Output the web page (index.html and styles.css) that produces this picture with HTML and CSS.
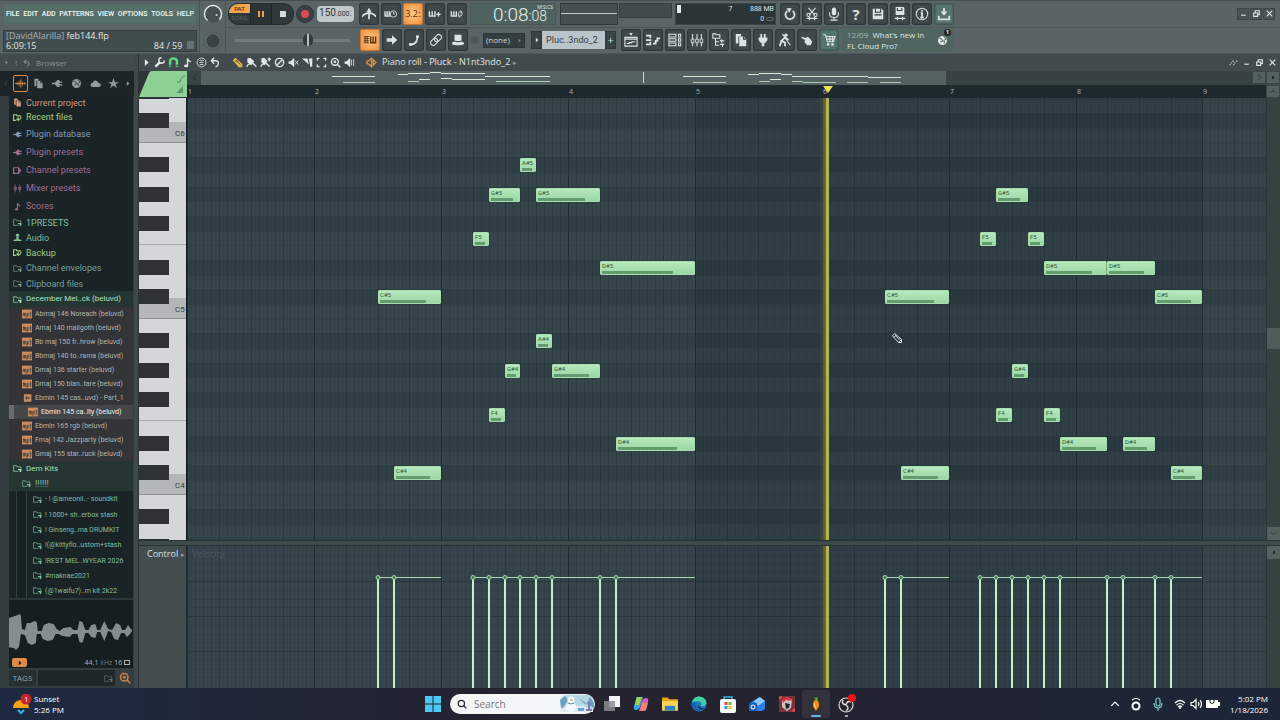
FILE: index.html
```html
<!DOCTYPE html>
<html lang="en">
<head>
<meta charset="utf-8">
<title>Piano roll - feb144.flp</title>
<link rel="stylesheet" href="styles.css">
</head>
<body>
<svg class="defs" aria-hidden="true">
  <symbol id="undo" viewBox="0 0 16 16"><path d="M5 4.5A5.2 5.2 0 1 0 11 4.5" class="ln2"/><path d="M4 1.500h6L7 6.500z" class="fl"/></symbol>
  <symbol id="metro" viewBox="0 0 16 16"><path d="M0 11q3-4 8-4t8 4M8 2v12" class="ln2"/><path d="M8 1l3 5H5z" class="fl"/></symbol>
  <symbol id="keysclock" viewBox="0 0 20 16"><path d="M1.500 4v7h8M4.500 4v6M7.500 4v6" class="ln2"/><circle cx="13.500" cy="8" r="4.500" class="ln"/><path d="M13.500 5v3h2" class="ln"/></symbol>
  <symbol id="keysplus" viewBox="0 0 20 16"><path d="M2 4v7h8V4M6 4v6M12 8.500h6M15 5.500v6" class="ln2"/></symbol>
  <symbol id="keysloop" viewBox="0 0 20 16"><path d="M2 4v7h7V4M5.500 4v6" class="ln2"/><path d="M12 10V7q0-3 5-2M17 6v3q0 3-5 2M15 3l2 2-2 2M14 9l-2 2 2 2" class="ln"/></symbol>
  <symbol id="roll" viewBox="0 0 20 16"><path d="M1 3h8M1 6h8M1 9h8M1 12h8M3 3v9M6 3v9" class="ln"/><path d="M11 3v9h7V3M14.500 3v8" class="ln2"/></symbol>
  <symbol id="arrow" viewBox="0 0 16 16"><path d="M2 6h6V2.500L14 8l-6 5.500V10H2z" class="fl"/></symbol>
  <symbol id="slide" viewBox="0 0 16 16"><path d="M3 13h3q4-1 5-4l1-5" class="ln2"/><circle cx="12" cy="4" r="1.800" class="fl"/><circle cx="4" cy="13" r="1.800" class="fl"/></symbol>
  <symbol id="link" viewBox="0 0 16 16"><g transform="rotate(-45 8 8)" class="ln"><rect x="0.500" y="5" width="9" height="6" rx="3"/><rect x="6.500" y="5" width="9" height="6" rx="3"/></g></symbol>
  <symbol id="hat" viewBox="0 0 16 16"><path d="M4 2h8v8q3 0 3 2t-7 2-7-2 3-2z" class="fl"/><path d="M4 9q4 2 8 0" class="dk"/></symbol>
  <symbol id="playlist" viewBox="0 0 16 16"><path d="M1 5h14v10H1zM1 7h14M3 12h3v-1h3v-1h4" class="ln"/><path d="M6 0h4L8 3z" class="fl"/></symbol>
  <symbol id="pianoroll" viewBox="0 0 16 16"><path d="M0 3h5M0 8h6M0 13h5M5 2v4M5 10v4" class="ln2"/><path d="M8 12h3V9h2V6h3" class="ln2"/></symbol>
  <symbol id="rack" viewBox="0 0 16 16"><path d="M1 1.500h8v3H1zM1 6.500h8v3H1zM1 11.500h8v3H1zM12 1.500h2.500v3H12zM12 6.500h2.500v3H12zM12 11.500h2.500v3H12z" class="ln"/></symbol>
  <symbol id="mixer" viewBox="0 0 16 16"><path d="M3 1v14M8 1v14M13 1v14" class="ln"/><path d="M1.500 7h3v4h-3zM6.500 7h3v4h-3zM11.500 7h3v4h-3z" class="hl"/></symbol>
  <symbol id="treei" viewBox="0 0 16 16"><path d="M1 1h3l1 1h4v4H1zM4 6v8h4M4 10h4M9 9h5M9 13h5M11 7v4M12 12v4" class="ln"/></symbol>
  <symbol id="docs" viewBox="0 0 16 16"><path d="M2 1h6v3H5v8H2z" class="fl"/><path d="M6 4h5l3 3v8H6z" class="fl"/><path d="M11 4v3h3" class="dk"/></symbol>
  <symbol id="plug" viewBox="0 0 16 16"><path d="M5 1h2v4h2V1h2v4h2v3l-2 3H9.500v4h-3v-4H5L3 8V5h2z" class="fl"/></symbol>
  <symbol id="worker" viewBox="0 0 16 16"><circle cx="9" cy="2.500" r="2" class="fl"/><path d="M8 5L4 9l4 2v4M4 9l-2 6M8 5l4 3" class="ln2"/><path d="M5 1l9 13" class="ln"/></symbol>
  <symbol id="touch" viewBox="0 0 16 16"><path d="M2 4l5 2 1-2 3 2 3 4-2 4H8L5 10l1-2-4-2z" class="fl"/></symbol>
  <symbol id="cart" viewBox="0 0 16 16"><path d="M1 2h3l2 8h7l2-6H5M6 7h8M9 4v6M12 4v6" class="ln"/><circle cx="7" cy="13" r="1.500" class="fl"/><circle cx="12" cy="13" r="1.500" class="fl"/></symbol>
  <symbol id="cut" viewBox="0 0 16 16"><path d="M4 1l7 8M12 1L5 9M2 13h12M5 11v4M11 11v4" class="ln"/><circle cx="4" cy="9" r="1.800" class="ln"/><circle cx="12" cy="9" r="1.800" class="ln"/></symbol>
  <symbol id="mic" viewBox="0 0 16 16"><rect x="5.500" y="0.500" width="5" height="9" rx="2.500" class="fl"/><path d="M3 6v2q0 4 5 4t5-4V6M8 12v3M4 15h8" class="ln"/></symbol>
  <symbol id="save" viewBox="0 0 16 16"><path d="M2 2h10l2 2v10H2z" class="fl"/><path d="M5 2v4h6V2M4 9h8" class="dk"/></symbol>
  <symbol id="saveas" viewBox="0 0 16 16"><path d="M3 0h9l1 1v8H3z" class="fl"/><path d="M5 1v3h5V1" class="dk"/><path d="M2 13h12M5 11v4M11 11v4" class="ln"/></symbol>
  <symbol id="info" viewBox="0 0 16 16"><circle cx="8" cy="8" r="6.500" class="ln"/><path d="M6.500 7H8v5M6 12h4M8 3.500v2" class="ln2"/></symbol>
  <symbol id="down" viewBox="0 0 16 16"><path d="M8 1v7M2 10v4h12v-4" class="ln2"/><path d="M4 5h8L8 10z" class="fl"/></symbol>
  <symbol id="min" viewBox="0 0 16 16"><path d="M4 11h8" class="ln2"/></symbol>
  <symbol id="restore" viewBox="0 0 16 16"><path d="M3 7h7v6H3zM6 7V3h7v7h-3" class="ln2"/></symbol>
  <symbol id="close" viewBox="0 0 16 16"><path d="M3 3l10 10M13 3L3 13" class="ln2"/></symbol>
  <symbol id="tri" viewBox="0 0 16 16"><path d="M5 2l7 6-7 6z" class="fl"/></symbol>
  <symbol id="chevr" viewBox="0 0 16 16"><path d="M5 2l6 6-6 6" class="ln2"/></symbol>
  <symbol id="chevl" viewBox="0 0 16 16"><path d="M11 2L5 8l6 6" class="ln2"/></symbol>
  <symbol id="chevu" viewBox="0 0 16 16"><path d="M2 11l6-6 6 6" class="ln2"/></symbol>
  <symbol id="chevd" viewBox="0 0 16 16"><path d="M2 5l6 6 6-6" class="ln2"/></symbol>
  <symbol id="wrench" viewBox="0 0 16 16"><path d="M2 14l7-7" class="ln3"/><path d="M15 5a4 4 0 1 1-4-4" class="ln2"/></symbol>
  <symbol id="magnet" viewBox="0 0 16 16"><path d="M3 14V7q0-5 5-5t5 5v7" class="ln3"/><path d="M1 12h4M11 12h4" class="dk"/></symbol>
  <symbol id="note" viewBox="0 0 16 16"><path d="M8 13V2q1 4 5 5" class="ln2"/><ellipse cx="6" cy="13" rx="3" ry="2" class="fl"/></symbol>
  <symbol id="stamp" viewBox="0 0 16 16"><circle cx="8" cy="8" r="6.500" class="ln"/><path d="M5 5h6M5 8h6M5 11h6" class="ln"/></symbol>
  <symbol id="back" viewBox="0 0 16 16"><path d="M6 1L2 5.500 6 10M2 5.500h6q5 0 4 5-1 3-4 4" class="ln2"/></symbol>
  <symbol id="pencil" viewBox="0 0 16 16"><path d="M2 5l3-3 9 8v4h-4zM4 7l3-3M10 14l4-4M6 5l6 6" class="ln"/></symbol>
  <symbol id="pencilf" viewBox="0 0 16 16"><path d="M1 5l4-4 10 9v5h-5z" class="fl"/><path d="M4 8l4-4M6 5l6 6" class="dk"/></symbol>
  <symbol id="brush" viewBox="0 0 16 16"><path d="M2 2l4-1 6 5-4 6-6-4z" class="fl"/><path d="M1 14q2-4 5-4M10 9l5 5" class="ln2"/></symbol>
  <symbol id="brushp" viewBox="0 0 16 16"><path d="M2 2l4-1 5 5-4 6-5-4z" class="fl"/><path d="M1 14q2-4 5-4M9 9l5 5M11 3h5M13.500 1v5" class="ln2"/></symbol>
  <symbol id="slash" viewBox="0 0 16 16"><circle cx="8" cy="8" r="6" class="ln2"/><path d="M4 12l8-8" class="ln2"/></symbol>
  <symbol id="mute" viewBox="0 0 16 16"><path d="M1 6h3l5-5v14l-5-5H1z" class="fl"/><path d="M10 5l5 6M15 5l-5 6" class="ln"/></symbol>
  <symbol id="slice" viewBox="0 0 16 16"><path d="M0 2h8l2 9zM10 2h5v12h-3z" class="fl"/></symbol>
  <symbol id="select" viewBox="0 0 16 16"><path d="M2 5V2h3M11 2h3v3M14 11v3h-3M5 14H2v-3" class="ln2"/></symbol>
  <symbol id="zoomi" viewBox="0 0 16 16"><circle cx="7" cy="7" r="5" class="ln2"/><path d="M10.500 10.500L15 15" class="ln2"/></symbol>
  <symbol id="zoomd" viewBox="0 0 16 16"><circle cx="7" cy="7" r="5" class="ln2"/><circle cx="7" cy="7" r="2" class="fl"/><path d="M10.500 10.500L15 15" class="ln2"/></symbol>
  <symbol id="spk" viewBox="0 0 16 16"><path d="M1 6h3l5-5v14l-5-5H1z" class="fl"/><path d="M11 4v8M14 3v10" class="ln"/></symbol>
  <symbol id="spko" viewBox="0 0 16 16"><path d="M1.500 6h2l4.500-4v12l-4.500-4h-2zM10.500 4l4 4-4 4z" class="ln2"/></symbol>
  <symbol id="wavei" viewBox="0 0 16 16"><path d="M0 8h16M3 6v4M6 4v8M8.500 2v12M11 5v6M13.500 6.500v3" class="ln"/></symbol>
  <symbol id="plugh" viewBox="0 0 16 16"><path d="M0 7h4l4-4h3v2h4v2h-4v2h4v2h-4v2H8L4 9H0z" class="fl"/></symbol>
  <symbol id="globe" viewBox="0 0 16 16"><circle cx="8" cy="8" r="6.500" class="fl"/><path d="M3 4l4 2 1 3-3 1M10 2l3 4-3 2 1 4" class="dk"/></symbol>
  <symbol id="cloud" viewBox="0 0 16 16"><path d="M3 13q-3-1-2-4 1-2 3-2 1-4 5-3 2 0 3 3 4 0 3.500 4 0 2-2.500 2z" class="fl"/></symbol>
  <symbol id="star" viewBox="0 0 16 16"><path d="M8 0l2 6h6l-5 3 2 6-5-4-5 4 2-6-5-3h6z" class="fl"/></symbol>
  <symbol id="folder" viewBox="0 0 16 16"><path d="M9 13H1V3h5l1 2h7v4" class="ln"/><path d="M9 10h5v3M12 12l2 2" class="ln2"/></symbol>
  <symbol id="folderr" viewBox="0 0 16 16"><path d="M6 13H1V3h5l1 2h7" class="ln2"/><path d="M14 6v3q-1 3-6 2M10 8l-3 3 4 3" class="ln2"/></symbol>
  <symbol id="chan" viewBox="0 0 16 16"><path d="M1 3h9v10H1z" class="ln2"/><path d="M11 3l4 5-4 5z" class="fl"/></symbol>
  <symbol id="mixs" viewBox="0 0 16 16"><path d="M4 1v14M12 1v14" class="ln"/><path d="M2 6h4v4H2zM10 6h4v4h-4z" class="ln"/></symbol>
  <symbol id="person" viewBox="0 0 16 16"><circle cx="8" cy="4" r="3" class="fl"/><path d="M6 7h4v4l5 1v2H1v-2l5-1z" class="fl"/></symbol>
  <symbol id="mp3" viewBox="0 0 16 16"><rect y="1" width="16" height="14" class="fl"/><path d="M2 12V6M2 7h4v5M4 7v5M8 14V7h2v4H8M12 5h2v7h-2M12 8h2" class="dk"/></symbol>
  <symbol id="clip" viewBox="0 0 16 16"><rect x="3" y="2" width="12" height="12" class="fl"/><path d="M5 8h8M7 5v6M10 6v4" class="dk"/></symbol>
  <symbol id="dots" viewBox="0 0 20 16"><path d="M1 13h3M4 9h3M7 5h4M9 13h3M11 9h3M15 5h4" class="ln2"/></symbol>
</svg>

<header class="top">
  <div class="topleft">
    <nav class="menu"><button>FILE</button><button>EDIT</button><button>ADD</button><button>PATTERNS</button><button>VIEW</button><button>OPTIONS</button><button>TOOLS</button><button>HELP</button></nav>
    <div class="hint"><div><span class="dim">[DavidAlarilla]</span> feb144.flp</div><div class="split"><span>6:09:15</span><span>84 / 59 &nbsp;<i class="can"></i></span></div></div>
  </div>
  <div class="knobs"><svg width="22" height="22" viewBox="0 0 22 22"><circle cx="11" cy="11" r="8.500" fill="#454e50" stroke="#dfe5e5" stroke-width="1.500" stroke-dasharray="40 14" transform="rotate(130 11 11)"/><circle cx="14.500" cy="12" r="1" fill="#ddd"/></svg><svg width="22" height="22" viewBox="0 0 22 22"><circle cx="11" cy="11" r="9" fill="none" stroke="#3b4446" stroke-dasharray="1 2"/><circle cx="11" cy="11" r="6.500" fill="#394244"/></svg></div>
  <div class="rows">
    <div class="row">
      <div class="transport">
        <button class="pat" aria-label="Pattern or song"><b>PAT</b><span>SONG</span></button>
        <button class="pause" aria-label="Pause"><i></i><i></i></button>
        <button class="stop" aria-label="Stop"><i></i></button>
      </div>
      <button class="rec" aria-label="Record"><i></i></button>
      <button class="tempo">150<small>.000</small><em>:</em></button>
      <div class="grp">
        <button class="tb" aria-label="Metronome"><svg><use href="#metro"/></svg></button>
        <button class="tb" aria-label="Wait for input"><svg><use href="#keysclock"/></svg></button>
        <button class="tb on" aria-label="Countdown"><span>3.2ː</span></button>
        <button class="tb" aria-label="Overdub"><svg><use href="#keysplus"/></svg></button>
        <button class="tb" aria-label="Loop record"><svg><use href="#keysloop"/></svg></button>
      </div>
      <div class="time"><span>0:08<small>:08</small></span><sup>M:S:CS</sup></div>
      <div class="scope"><i></i></div>
      <div class="scope2"></div>
      <div class="cpu"><i class="bar"></i><span class="c1">7</span><span class="c2">888 MB<br>0 <i class="pill"></i></span></div>
      <div class="grp">
        <button class="tb" aria-label="Undo"><svg><use href="#undo"/></svg></button>
        <button class="tb" aria-label="Cut"><svg><use href="#cut"/></svg></button>
        <button class="tb" aria-label="Record audio"><svg><use href="#mic"/></svg></button>
        <button class="tb" aria-label="Help"><b class="q">?</b></button>
        <button class="tb" aria-label="Save"><svg><use href="#save"/></svg></button>
        <button class="tb" aria-label="Save as"><svg><use href="#saveas"/></svg></button>
        <button class="tb" aria-label="Info"><svg><use href="#info"/></svg></button>
        <button class="tb teal" aria-label="Download"><svg><use href="#down"/></svg></button>
      </div>
      <div class="win"><button aria-label="Minimise"><svg><use href="#min"/></svg></button><button aria-label="Restore"><svg><use href="#restore"/></svg></button><button aria-label="Close"><svg><use href="#close"/></svg></button></div>
    </div>
    <div class="row">
      <input class="pitch" type="range" min="0" max="100" value="65" aria-label="Song position">
      <div class="grp">
        <button class="tb on" aria-label="Typing keyboard"><svg><use href="#roll"/></svg></button>
        <button class="tb" aria-label="Step edit"><svg><use href="#arrow"/></svg></button>
        <button class="tb" aria-label="Slide"><svg><use href="#slide"/></svg></button>
        <button class="tb" aria-label="Link"><svg><use href="#link"/></svg></button>
        <button class="tb" aria-label="Multilink"><svg><use href="#hat"/></svg></button>
      </div>
      <i class="dot"></i>
      <button class="none">(none)<svg><use href="#tri"/></svg></button>
      <div class="pattern"><button aria-label="Pattern menu"><svg><use href="#tri"/></svg></button><button class="pname">Pluc..3ndo_2<em>:</em></button><button>+</button></div>
      <div class="grp">
        <button class="tb" aria-label="Playlist"><svg><use href="#playlist"/></svg></button>
        <button class="tb" aria-label="Piano roll"><svg><use href="#pianoroll"/></svg></button>
        <button class="tb" aria-label="Channel rack"><svg><use href="#rack"/></svg></button>
        <button class="tb" aria-label="Mixer"><svg><use href="#mixer"/></svg></button>
        <button class="tb" aria-label="Browser"><svg><use href="#treei"/></svg></button>
        <button class="tb" aria-label="Project"><svg><use href="#docs"/></svg></button>
        <button class="tb" aria-label="Plugins"><svg><use href="#plug"/></svg></button>
        <button class="tb" aria-label="Performance"><svg><use href="#worker"/></svg></button>
        <button class="tb" aria-label="Touch"><svg><use href="#touch"/></svg></button>
        <button class="tb teal" aria-label="Shop"><svg><use href="#cart"/></svg></button>
      </div>
      <div class="news"><p><span class="dim">12/09</span>&nbsp; What's new in FL Cloud Pro?</p><svg><use href="#globe"/></svg><b>1</b></div>
    </div>
  </div>
</header>

<main class="main">
  <aside class="browser">
    <div class="bhead"><svg><use href="#tri"/></svg><b>↑</b><svg class="big"><use href="#back"/></svg><span>Browser</span></div>
    <div class="tabs"><svg class="s"><use href="#chevl"/></svg><button class="sel" aria-label="All"><svg><use href="#wavei"/></svg></button><button aria-label="Project"><svg><use href="#docs"/></svg></button><button aria-label="Plugins"><svg><use href="#plugh"/></svg></button><button aria-label="Library"><svg><use href="#globe"/></svg></button><button aria-label="Cloud"><svg><use href="#cloud"/></svg></button><button aria-label="Starred"><svg><use href="#star"/></svg></button><svg class="s lit"><use href="#tri"/></svg></div>
    <div class="bbody">
      <ul class="tree" id="tree"></ul>
      <div class="wave"><svg viewBox="0 0 125 48" preserveAspectRatio="none"><path d="M0 24V11l3-1 6-2 2-1 1 2 1 13 3 1 2-7 4 0 3-2 3 1 1 9h4l2-6 5-2 5 1 3 5 3 2 4-3 7-1 3 3h4l2-9 3 1 3 8h3l3-5 4-1 2 6h3l4-9 4 8 4 1 4-7 4 2 2 5h3l3-5 2 3 2 2 0 1-2 3-3 3-3-4h-3l-3 7-4-1-3-7-3-1-4 10-4-9h-3l-2 6-4-1-3-4h-3l-3 10-3-1-2-8h-5l-3 3-7-1-4-2h-3l-3 6-5 1-5-2-2-5h-4l-1 9-4 2-4-2-3-8-4-1-2 13-3 3-2-2-6-1z"/></svg>
        <div class="split"><button class="play" aria-label="Play sample"><svg><use href="#tri"/></svg></button><span>44.1 <span class="dim">kHz</span> 16 <i class="loop"></i></span></div></div>
      <div class="tags"><button>TAGS</button><label><input type="text" aria-label="Search browser"><svg><use href="#folder"/></svg></label><svg class="find"><use href="#zoomd"/></svg></div>
    </div>
  </aside>

  <section class="editor">
    <div class="ehead">
      <div class="tools"><svg><use href="#tri"/></svg><svg><use href="#wrench"/></svg><svg class="green"><use href="#magnet"/></svg><svg><use href="#note"/></svg><svg><use href="#stamp"/></svg><svg><use href="#back"/></svg></div>
      <div class="tools"><svg class="gold"><use href="#pencilf"/></svg><svg><use href="#brush"/></svg><svg><use href="#brushp"/></svg><svg><use href="#slash"/></svg><svg><use href="#mute"/></svg><svg><use href="#slice"/></svg><svg><use href="#select"/></svg><svg><use href="#zoomd"/></svg><svg><use href="#spk"/></svg></div>
      <svg class="orange"><use href="#spko"/></svg>
      <h1>Piano roll - Pluck - N1nt3ndo_2 <small>▸</small></h1>
      <div class="wbtn"><svg><use href="#dots"/></svg><svg><use href="#min"/></svg><svg><use href="#restore"/></svg><svg><use href="#close"/></svg></div>
    </div>
    <div class="grid">
      <div class="corner"><svg viewBox="0 0 48 26"><path d="M0 26L10 2q1-2 3-2h35v26z" fill="#8fd095"/><path d="M38 11h3q1-6 5-6" fill="none" stroke="#4d8a5c"/><path d="M37 22l7-7v7z" fill="#5a9a68"/></svg></div>
      <div class="over"><button aria-label="Scroll left"><svg><use href="#chevl"/></svg></button><div class="thumb"><svg id="mini"></svg></div><span class="fill"></span><button class="lit" aria-label="Scroll right"><svg><use href="#chevr"/></svg></button></div>
      <div class="cell lit"><i></i></div>
      <div class="ruler" id="ruler"></div>
      <div class="cell lit"><svg><use href="#chevu"/></svg></div>
      <div class="piano"><svg id="keyboard" width="48" height="100%"></svg></div>
      <div class="roll"><svg id="rollgrid" width="100%" height="100%"></svg><div id="notes"></div><svg class="cursor"><use href="#pencil"/></svg></div>
      <div class="vscroll"><i class="vthumb"></i><span><svg><use href="#chevd"/></svg></span></div>
      <div class="sep"></div>
      <div class="control">Control <small>▸</small></div>
      <div class="velo"><svg id="velogrid" width="100%" height="100%"></svg><span class="ghost">Velocity</span></div>
      <div class="vscroll"><b><i></i></b></div>
    </div>
  </section>
</main>

<footer class="taskbar">
  <div class="weather"><svg width="20" height="20" viewBox="0 0 20 20"><path d="M1 14a8 8 0 0 1 16 0z" fill="#f6a313"/><path d="M6 16l3 3 3-3" fill="none" stroke="#35b6e6" stroke-width="2"/><circle cx="14" cy="5" r="5.500" fill="#c3242b"/><text x="12" y="8" font-size="8" fill="#fff">1</text></svg><div>Sunset<br>5:26 PM</div></div>
  <div class="apps">
    <svg width="16" height="16" viewBox="0 0 16 16"><path d="M0 0h7.500v7.500H0zM8.500 0H16v7.500H8.500zM0 8.500h7.500V16H0zM8.500 8.500H16V16H8.500z" fill="#4cc8f5"/></svg>
    <label class="search"><svg><use href="#zoomi"/></svg><input type="search" placeholder="Search" aria-label="Search"><svg class="snow" viewBox="0 0 34 18"><rect width="34" height="17" rx="7" fill="#b4d8e4"/><path d="M0 5l5-4 3 4-6 9zM18 3l8 7 4-8 4 6v5z" fill="#6d9fbb"/><path d="M1 14l8-4 14 1 10 4v2H1z" fill="#dcecf2"/><circle cx="11" cy="12" r="5" fill="#f4fafb"/><circle cx="11" cy="5" r="3.500" fill="#f4fafb"/><path d="M8 8q3 2 6 0" stroke="#4d8a9a" fill="none"/><path d="M10 5h3" stroke="#d88a3d"/><path d="M29 7v8M26 15h6" stroke="#7e78b8" stroke-width="2"/><path d="M18 13h6v3h-6z" fill="#6c9fd2"/></svg></label>
    <svg width="16" height="16" viewBox="0 0 16 16"><rect x="5" width="11" height="11" fill="#f2f2f4"/><rect y="5" width="11" height="10" fill="#8a8a92" opacity="0.850"/></svg>
    <svg width="16" height="16" viewBox="0 0 16 16"><path d="M4 1h6l-3 10q-1 3-4 3-3 0-2-4l2-7q0-2 1-2z" fill="#37a8e0"/><path d="M4 1h5L6 9H2z" fill="#9fd34a"/><path d="M12 15H6l3-10q1-3 4-3 3 0 2 4l-2 7q0 2-1 2z" fill="#d75bb8"/><path d="M9 7h6l-2 7-6 1z" fill="#f0836a"/></svg>
    <svg width="16" height="16" viewBox="0 0 17 16"><path d="M0 1h6l2 2h9v12H0z" fill="#e8a41f"/><path d="M0 5h17v10H0z" fill="#ffd35a"/><path d="M3 10h11v5H3z" fill="#2d86c4"/></svg>
    <svg width="16" height="16" viewBox="0 0 17 17"><circle cx="8.500" cy="8.500" r="8" fill="#1b7fd0"/><path d="M1 7Q3 0 9 .500q7 1 7.500 7-1 4-6 3 2-5-3-5T1 7z" fill="#45cfa0"/><path d="M6 7q-2 6 4 9-8 1-9-7 1-4 5-2z" fill="#1560b0"/><path d="M8 9q0 4 7 4-5 4-8-1z" fill="#17365a"/></svg>
    <svg width="16" height="17" viewBox="0 0 16 17"><path d="M4 4V1h8v3" fill="none" stroke="#3bb5e8" stroke-width="1.500"/><rect y="3" width="16" height="14" rx="2" fill="#f4f6f8"/><path d="M4.500 6h3v3h-3z" fill="#e8502f"/><path d="M8.500 6h3v3h-3z" fill="#7ab82e"/><path d="M4.500 10h3v3h-3z" fill="#2a9be0"/><path d="M8.500 10h3v3h-3z" fill="#f5b921"/></svg>
    <svg width="17" height="16" viewBox="0 0 17 16"><path d="M1 7l9-6 6 4v8l-3 2H3z" fill="#2f7de0"/><path d="M5 5l6-4 5 4-7 5z" fill="#8cc8f5"/><rect y="7" width="8" height="8" rx="1" fill="#1460c0"/><circle cx="4" cy="11" r="2" fill="none" stroke="#fff"/></svg>
    <svg width="16" height="16" viewBox="0 0 16 16"><path d="M0 0h16v16H0z" fill="#7c3038"/><path d="M3 4q5-5 10 0l-1 8-4 3-5-4z" fill="#c9c2c2"/><path d="M3 3q6-4 10 2l-6-1-3 3z" fill="#d8323a"/><path d="M6 7l5 1-1 4-3 1z" fill="#26262c"/><path d="M0 0l4 1-4 3zM16 16l-4-1 4-3z" fill="#e34b4b"/></svg>
    <span class="active"><svg width="16" height="16" viewBox="0 0 16 16"><circle cx="8" cy="8" r="7.500" fill="#33322f"/><path d="M8 15Q3 9 6 5q2-2 4 0 3 4-2 10z" fill="#f58a1f"/><path d="M6 7l2 6" stroke="#ffd36b"/><path d="M8 5L6 1l2 1 1-1 1 2z" fill="#62b344"/></svg></span>
    <span class="obs"><svg width="20" height="20" viewBox="0 0 20 20"><circle cx="9" cy="11" r="7" fill="#25232a" stroke="#d8d8dc" stroke-width="1.200"/><path d="M9 11q-5-1-3-5M9 11q1-5 5-3M9 11q4 3 0 6" fill="none" stroke="#d8d8dc" stroke-width="1.500"/><circle cx="15" cy="4" r="4" fill="#f00f14"/></svg></span>
  </div>
  <div class="tray">
    <svg width="10" height="10" viewBox="0 0 16 16"><use href="#chevu"/></svg>
    <svg width="12" height="14" viewBox="0 0 12 14"><circle cx="6" cy="9" r="3.500" class="ln2"/><path d="M2 3q4-3 8 0" class="ln"/></svg>
    <svg class="cyan" width="12" height="14" viewBox="0 0 12 14"><rect x="4" y="1" width="4" height="8" rx="2" class="ln"/><path d="M2 6q0 5 4 5t4-5M6 11v3" class="ln"/></svg>
    <div class="sys"><svg width="12" height="12" viewBox="0 0 12 12"><path d="M1 5q5-5 10 0M2.500 7q3.500-3 7 0M4 9q2-2 4 0" class="ln"/><circle cx="6" cy="10" r="1" class="fl"/></svg><svg width="12" height="12" viewBox="0 0 12 12"><path d="M1 4.500h2l3-3v9l-3-3H1zM8 4q2 2 0 4M10 2q3 4 0 8" class="ln"/></svg><svg width="14" height="12" viewBox="0 0 14 12"><path d="M0 2h12v8H0zM12 4h2v4h-2z" class="fl"/><path d="M4 0v4q2 3 4 0V0" class="dk"/></svg></div>
    <div class="clock">5:02 PM<br>1/18/2026</div>
  </div>
</footer>
<script src="app.js"></script>
</body>
</html>
```

FILE: styles.css
```css
* { box-sizing: border-box; }
html, body { height: 100%; margin: 0; }
body { display: flex; flex-direction: column; overflow: hidden; background: #3f494c; color: #dbe2e1; font-family: "Open Sans", "Noto Sans", sans-serif; font-size: 10px; line-height: 12px; }
button { font: inherit; color: inherit; background: none; border: 0; padding: 0; margin: 0; }
svg { display: block; flex: none; }
p, h1, ul { margin: 0; padding: 0; }
.defs { position: absolute; width: 0; height: 0; }
.ln, .ln2, .ln3 { fill: none; stroke: currentColor; stroke-width: 1.2; }
.ln2 { stroke-width: 2; }
.ln3 { stroke-width: 3.5; }
.fl { fill: currentColor; }
.hl { fill: #3d4749; stroke: currentColor; }
.dk { fill: none; stroke: #30393b; stroke-width: 1.2; }
.dim { opacity: .6; }
.split { display: flex; justify-content: space-between; align-items: center; }

.top { display: flex; height: 54px; flex: none; background: #5a6466; border-top: 1px solid #454e50; border-bottom: 1px solid #4d5658; }
.topleft { width: 200px; flex: none; padding: 3px 2px 1px 3px; border-right: 1px solid #495254; display: flex; flex-direction: column; gap: 6px; }
.menu { height: 20px; background: #567069; border: 1px solid #506963; display: flex; align-items: center; justify-content: space-between; padding: 0 2px; font-family: Roboto, sans-serif; font-size: 7px; font-weight: 500; color: #f1f8f5; }
.hint { height: 23px; background: #414c4e; border: 1px solid #343e40; padding: 0 2px; line-height: 10px; font-size: 9px; color: #e3e8e7; }
.can { display: inline-block; width: 7px; height: 8px; background: #667173; }
.knobs { width: 26px; flex: none; display: flex; flex-direction: column; gap: 5px; align-items: center; padding-top: 2px; border-right: 1px solid #4c5557; }
.rows { flex: 1; display: flex; flex-direction: column; min-width: 0; }
.row { height: 27px; display: flex; align-items: center; border-bottom: 1px solid #4c5557; padding-left: 2px; }
.row:last-child { border: 0; height: 26px; }
.transport { display: flex; width: 66px; height: 22px; border-radius: 10px; overflow: hidden; background: #30393b; border: 1px solid #262e30; }
.pat { width: 21px; display: flex; flex-direction: column; font: 6px/9px Roboto, sans-serif; color: #5a6365; text-align: center; }
.pat b { background: #f4a64f; font-weight: 500; color: #4a2b10; width: 100%; height: 9px; }
.pat span { width: 100%; }
.pause { width: 22px; background: #2b3335; border: 1px solid #1f2628; border-width: 0 1px; display: flex; gap: 2px; align-items: center; justify-content: center; }
.pause i { width: 2px; height: 6px; background: #f0a04a; }
.stop { flex: 1; display: flex; align-items: center; justify-content: center; }
.stop i { width: 6px; height: 6px; background: #d6dcdb; }
.rec { width: 18px; height: 18px; border-radius: 9px; background: #394143; border: 1px solid #2c3436; margin-left: 2px; display: flex; align-items: center; justify-content: center; }
.rec i { width: 8px; height: 8px; border-radius: 4px; background: #dd4a55; }
.tempo { width: 37px; height: 16px; border-radius: 4px; background: #bfc9cb; color: #30393b; margin: 0 5px 0 3px; font-family: Roboto, sans-serif; font-size: 10px; white-space: nowrap; }
.tempo small { font-size: 7px; }
em { font-style: normal; opacity: .5; }
.grp { display: flex; gap: 2px; }
.tb { width: 20px; height: 22px; background: #3f484a; border: 1px solid #2f383a; border-radius: 2px; box-shadow: inset 0 0 2px #2d3638; display: flex; align-items: center; justify-content: center; color: #dde3e2; }
.tb svg { width: 14px; height: 14px; }
.tb.on { background: radial-gradient(#ffca85, #f08f3e); border-color: #c97632; color: #593113; box-shadow: none; font-size: 9px; }
.tb.teal { background: #56756e; border-color: #3f5a55; }
.q { font-size: 15px; }
.time { width: 86px; height: 22px; margin: 0 4px 0 3px; background: #50625f; border: 1px solid #485755; display: flex; justify-content: flex-end; padding-right: 2px; font-family: Roboto, sans-serif; font-weight: 300; font-size: 19px; line-height: 21px; color: #e4f2ee; position: relative; }
.time span { padding-right: 6px; }
.time small { font-size: 14px; }
.time sup { position: absolute; right: 2px; top: 1px; font: 5px/5px "Open Sans", sans-serif; }
.scope { width: 58px; height: 22px; background: #465052; border: 1px solid #31393b; display: flex; align-items: center; }
.scope i { flex: 1; height: 1px; background: #c6cecd; }
.scope2 { width: 53px; height: 15px; margin: 0 3px 7px 1px; background: #414a4c; border: 1px solid #353e40; }
.cpu { width: 101px; height: 22px; background: #2b3437; border: 1px solid #3b4446; display: flex; justify-content: space-between; padding: 0 1px; margin-right: 4px; font: 7px/10px Roboto, sans-serif; }
.cpu .bar { width: 4px; height: 8px; margin-top: 1px; background: #e4e9e9; }
.c1 { padding-left: 30px; }
.c2 { text-align: right; }
.pill { display: inline-block; width: 8px; height: 4px; border: 1px solid #5f6a6c; border-radius: 2px; }
.win { margin-left: auto; display: flex; gap: 1px; padding-right: 5px; }
.win button { width: 12px; height: 12px; border: 1px solid #3c4547; background: #4a5355; display: flex; align-items: center; justify-content: center; }
.win svg { width: 9px; height: 9px; }
.pitch { appearance: none; width: 115px; height: 12px; margin: 0 10px 0 7px; background: linear-gradient(#727c7e, #727c7e) center / 100% 3px no-repeat; }
.pitch::-webkit-slider-thumb { appearance: none; width: 10px; height: 12px; border-radius: 5px; background: linear-gradient(90deg, #30393b 4px, #b8c0c0 4px, #b8c0c0 6px, #30393b 6px); }
.dot { width: 8px; height: 8px; border-radius: 4px; background: #4e585a; margin: 0 4px 0 3px; }
.none { width: 42px; height: 15px; background: #343d3f; border: 1px solid #2c3537; display: flex; align-items: center; justify-content: space-between; padding: 0 2px; font-size: 8px; color: #cfd7d6; }
.none svg { width: 5px; height: 5px; opacity: .5; }
.pattern { display: flex; margin: 0 5px 0 6px; height: 18px; }
.pattern button { width: 11px; background: #394244; border: 1px solid #30383a; display: flex; align-items: center; justify-content: center; }
.pattern svg { width: 6px; height: 6px; }
.pattern .pname { width: 63px; background: #bac5cb; color: #323c40; border: 0; gap: 1px; font-family: Roboto, sans-serif; font-size: 9px; }
.news { width: 111px; height: 22px; margin-left: 3px; background: #50655f; display: flex; align-items: center; position: relative; padding: 0 5px; font-size: 8px; line-height: 11px; color: #dde8e4; }
.news p { width: 84px; }
.news svg { width: 11px; height: 11px; margin-left: auto; }
.news b { position: absolute; right: 2px; top: 0; width: 7px; height: 7px; line-height: 7px; font-size: 6px; text-align: center; border-radius: 4px; background: #20282a; }

.main { flex: 1; display: flex; min-height: 0; }
.browser { width: 134px; flex: none; display: flex; flex-direction: column; background: #343e41; }
.bhead { height: 17px; background: #414b4e; display: flex; align-items: center; gap: 5px; padding-left: 4px; color: #899395; font-size: 8px; }
.bhead svg { width: 5px; height: 5px; }
.bhead svg.big { width: 8px; height: 8px; }
.tabs { height: 25px; background: #1d2527; display: flex; align-items: center; padding: 0 3px; color: #929b9d; justify-content: space-between; }
.tabs svg { width: 11px; height: 11px; }
.tabs svg.s { width: 6px; height: 7px; opacity: .4; }
.tabs svg.lit { opacity: 1; }
.tabs button { width: 15px; height: 17px; display: flex; align-items: center; justify-content: center; }
.tabs .sel { border: 1px solid #d98a45; border-radius: 2px; color: #e39149; }
.bbody { flex: 1; min-height: 0; margin: 0 1px 0 9px; display: flex; flex-direction: column; background: #1a2325; }
.tree { flex: 1; overflow: hidden; list-style: none; font-family: Roboto, sans-serif; font-size: 9px; }
.tree li { display: flex; align-items: center; gap: 4px; padding-left: 4px; white-space: nowrap; height: 15px; }
.tree svg { width: 9px; height: 9px; }
.tree .h13 { height: 13px; }
.tree .h16 { height: 16px; }
.tree .h18 { height: 18px; }
.tree .file { height: 14px; padding-left: 13px; gap: 3px; background: #323437; color: #b4b4b1; font-size: 7px; }
.tree .file svg { width: 10px; height: 10px; color: #d08b5a; }
.tree .picked { padding-left: 0; background: #44474a; color: #f2f2ef; }
.tree .picked::before { content: ""; width: 5px; height: 14px; background: #696c70; margin-right: 11px; }
.tree .open { background: #253532; color: #a9e2bd; font-size: 8px; }
.tree .sub1 { padding-left: 13px; background: #253532; }
.tree .sub2 { margin-left: 17px; padding-left: 6px; border-left: 1px solid #2e423d; box-shadow: -9px 0 0 #18211f, -10px 0 0 #2e423d; gap: 3px; font-size: 7px; }
.peach { color: #cf957c; } .lime { color: #9fce7f; } .blue { color: #8298b8; } .plum { color: #a36c93; } .mint { color: #82bfa0; } .sage { color: #7c9f96; }
.wave { height: 70px; background: #161e20; border-top: 2px solid #2c3739; display: flex; flex-direction: column; justify-content: flex-end; padding-bottom: 1px; font-size: 7px; color: #a9b1b2; line-height: 9px; }
.wave > svg { width: 100%; height: 48px; fill: #858d90; }
.wave .split { padding: 0 3px; margin-top: 3px; }
.play { width: 15px; height: 9px; border-radius: 2px; background: #dd8c48; color: #1b1b1b; display: flex; align-items: center; justify-content: center; }
.play svg { width: 6px; height: 6px; }
.loop { display: inline-block; width: 6px; height: 5px; border: 1px solid #a9b1b2; }
.tags { height: 20px; background: #343e41; display: flex; align-items: center; gap: 2px; }
.tags button { width: 27px; height: 16px; background: #262f31; font-size: 8px; color: #9aa3a4; }
.tags label { flex: 1; height: 16px; background: #1f272a; display: flex; align-items: center; padding-right: 2px; min-width: 0; }
.tags input { flex: 1; min-width: 0; background: none; border: 0; color: inherit; }
.tags label svg { width: 9px; height: 9px; opacity: .4; }
.find { width: 12px; height: 12px; margin: 0 2px; color: #d0813f; }

.editor { flex: 1; min-width: 0; display: flex; flex-direction: column; margin-left: 4px; border-left: 1px solid #2b3436; }
.ehead { height: 17px; flex: none; display: flex; align-items: center; padding: 0 3px; color: #e2e8e7; background: #414b4e; }
.ehead svg { width: 11px; height: 11px; }
.tools { display: flex; gap: 3px; margin-right: 11px; }
.tools svg:first-child { width: 9px; }
.ehead .green { color: #5edb87; }
.tools .gold:first-child { color: #e5b64f; width: 11px; }
.ehead .orange { color: #dd8f43; }
h1 { font-size: 9px; font-weight: 400; padding-left: 5px; }
h1 small, .control small { opacity: .5; font-size: 7px; }
.wbtn { margin-left: auto; display: flex; gap: 4px; }
.wbtn svg { width: 9px; height: 9px; }
.grid { flex: 1; min-height: 0; display: grid; grid-template-columns: 48px minmax(0, 1fr) 14px; grid-template-rows: 14px 13px minmax(0, 1fr) 6px 142px; }
.corner { grid-row: 1 / 3; background: #2b3538; }
.corner svg { width: 48px; height: 26px; }
.over { display: flex; background: #394245; }
.over button, .cell { width: 14px; height: 13px; display: flex; align-items: center; justify-content: center; color: #20282a; }
.over button svg, .cell svg { width: 7px; height: 7px; }
.over .lit, .cell.lit { background: #536062; border: 1px solid #3b4446; }
.cell i, .vscroll b i { width: 2px; height: 3px; background: #20282a; }
.thumb { width: 745px; background: #566163; flex: 0 1 auto; min-width: 0; overflow: hidden; }
.thumb svg { width: 745px; height: 14px; }
.fill { flex: 1; }
.ruler { background: #1e292d; position: relative; overflow: hidden; font-size: 7px; line-height: 13px; color: #abb4b5; }
.ruler span { position: absolute; top: 0; }
.ruler i { position: absolute; top: 1px; border: 5px solid transparent; border-top: 7px solid #f0dd5a; border-bottom: 0; }
.piano { overflow: hidden; border-right: 1px solid #131b1e; }
.roll { position: relative; overflow: hidden; background: #303f46; }
.note { position: absolute; height: 14px; background: linear-gradient(#b6e8bc, #9bd8a4); border: 1px solid #a8dfae; box-shadow: 0 0 0 1px #24402f55; font: 6px/7px Roboto, sans-serif; color: #2c5a3b; padding-left: 1px; border-radius: 1px; overflow: hidden; }
.note i { display: block; width: 77%; height: 3px; margin-top: 2px; background: #629c70; }
.cursor { position: absolute; left: 704px; top: 234px; width: 12px; height: 12px; color: #e9eeee; }
.vscroll { background: #374043; display: flex; flex-direction: column; justify-content: flex-end; position: relative; border-left: 1px solid #28343a; }
.vthumb { position: absolute; top: 52%; left: 0; right: 0; height: 21px; background: #515b5e; }
.vscroll span, .vscroll b { height: 13px; background: #566163; color: #262e30; display: flex; align-items: center; justify-content: center; }
.vscroll svg { width: 7px; height: 7px; }
.vscroll b { margin-bottom: auto; }
.sep { grid-column: 1 / -1; background: #3f4a4d; border: 1px solid #263236; border-width: 1px 0; }
.control { background: #434c4e; border-right: 1px solid #232d30; padding: 2px 0 0 8px; font-size: 9px; white-space: nowrap; }
.velo { position: relative; overflow: hidden; background: #303f46; }
.ghost { position: absolute; left: 5px; top: 2px; color: #4b5b61; font-size: 9px; }

.taskbar { height: 32px; flex: none; display: grid; grid-template-columns: 1fr auto 1fr; align-items: center; background: linear-gradient(90deg, #1d2a40, #24232f 40%, #24232f 60%, #1c2638); font-size: 8px; line-height: 11px; color: #fff; }
.weather { display: flex; align-items: center; gap: 2px; padding-left: 12px; }
.apps { display: flex; align-items: center; gap: 13px; padding-left: 2px; }
.search { display: flex; align-items: center; width: 145px; height: 20px; border-radius: 10px; background: #f4f5f6; color: #2a2d33; padding: 0 1px 0 7px; margin: 0 -4px 0 -4px; gap: 7px; }
.search > svg { width: 10px; height: 10px; }
.search .snow { width: 34px; height: 18px; }
.search input { flex: 1; min-width: 0; border: 0; background: none; padding: 0; font: 10px "Open Sans", sans-serif; }
.active { position: relative; }
.active::after { content: ""; position: absolute; left: 3px; right: 3px; bottom: -5px; height: 2px; border-radius: 1px; background: #62b7e8; }
.active::before { content: ""; position: absolute; inset: -6px -6px; border-radius: 3px; background: #ffffff12; }
.active svg { position: relative; }
.obs { position: relative; }
.obs::after { content: ""; position: absolute; left: 8px; bottom: -3px; width: 3px; height: 2px; background: #a5a7ad; }
.tray { display: flex; align-items: center; justify-content: flex-end; gap: 10px; padding-right: 12px; }
.cyan { color: #7cc8cc; }
.sys { display: flex; gap: 4px; }
.clock { text-align: right; }
```

FILE: app.js
```js
const SVG = "http://www.w3.org/2000/svg";
const STEP = 7.93;
const ROW = 44 / 3;
const x = step => Math.round(step * STEP + 0.4);
const rowY = row => Math.round(row * ROW + 0.7);

function add(parent, tag, attrs, text) {
  const el = document.createElementNS(SVG, tag);
  for (const key in attrs) el.setAttribute(key, attrs[key]);
  if (text) el.textContent = text;
  parent.appendChild(el);
  return el;
}
const rect = (p, rx, ry, w, h, fill) => add(p, "rect", { x: rx, y: ry, width: w, height: h, fill });

/* Rows count down from D6, so row 0 is D6 and row 2 is C6. */
const NAMES = ["C", "C#", "D", "D#", "E", "F", "F#", "G", "G#", "A", "A#", "B"];
const pitchOf = row => 74 - row;
const isBlack = row => NAMES[((pitchOf(row) % 12) + 12) % 12].length === 2;
const rowOf = name => {
  const octave = Number(name.slice(-1));
  return 74 - (octave * 12 + NAMES.indexOf(name.slice(0, -1)));
};

const notes = [
  ["C#5", 24, 32], ["C#4", 26, 32], ["F5", 36, 38], ["G#5", 38, 42], ["A#5", 42, 44], ["G#5", 44, 52],
  ["F4", 38, 40], ["G#4", 40, 42], ["A#4", 44, 46], ["G#4", 46, 52], ["D#5", 52, 64], ["D#4", 54, 64],
  ["C#5", 88, 96], ["C#4", 90, 96], ["F5", 100, 102], ["G#5", 102, 106], ["F5", 106, 108], ["D#5", 108, 116],
  ["D#5", 116, 122], ["C#5", 122, 128], ["F4", 102, 104], ["G#4", 104, 106], ["F4", 108, 110],
  ["D#4", 110, 116], ["D#4", 118, 122], ["C#4", 124, 128]
];

function columns(svg) {
  rect(svg, 0, 0, x(64), "100%", "#ffffff08");
  rect(svg, x(128), 0, "100%", "100%", "#ffffff08");
  for (let half = 0; half < 640; half++) {
    const step = half / 2;
    const fill = step % 16 === 0 ? "#18262cc0" : step % 4 === 0 ? "#1c2a3080" : step % 1 === 0 ? "#1c2a3040" : "#1c2a301c";
    rect(svg, x(step), 0, 1, "100%", fill);
  }
}
function playhead(svg) {
  const id = "glow" + svg.id;
  const g = add(svg, "linearGradient", { id });
  add(g, "stop", { offset: 0, "stop-color": "#6c7029", "stop-opacity": 0 });
  add(g, "stop", { offset: 1, "stop-color": "#7f8030" });
  rect(svg, 633, 0, 7, "100%", `url(#${id})`);
  rect(svg, 639, 0, 3, "100%", "#b3b551");
}

const roll = document.getElementById("rollgrid");
for (let r = 0; r < 80; r++) {
  if (isBlack(r)) rect(roll, 0, rowY(r), "100%", rowY(r + 1) - rowY(r), "#2a3940");
  rect(roll, 0, rowY(r), "100%", 1, "#1f2d3330");
}
columns(roll);
playhead(roll);

const noteBox = document.getElementById("notes");
for (const [name, from, to] of notes) {
  const el = document.createElement("div");
  el.className = "note";
  el.style.left = x(from) + "px";
  el.style.top = rowY(rowOf(name)) + 1 + "px";
  el.style.width = x(to) - x(from) + "px";
  el.textContent = name;
  el.appendChild(document.createElement("i"));
  noteBox.appendChild(el);
}

const kb = document.getElementById("keyboard");
rect(kb, 0, 0, 48, "100%", "#d3d7da");
for (let r = -1; r < 80; r++) {
  const name = NAMES[((pitchOf(r) % 12) + 12) % 12];
  if (name === "C") {
    rect(kb, 0, rowY(r) - 6, 48, 21, "#b3b7ba");
    rect(kb, 0, rowY(r + 1) - 1, 48, 1, "#8d9295");
    add(kb, "text", { x: 36, y: rowY(r) + 8, "font-size": 8, "font-family": "Roboto, sans-serif", fill: "#3a4043" }, "C" + Math.floor(pitchOf(r) / 12));
  }
  if (name === "F") rect(kb, 0, rowY(r + 1) - 1, 48, 1, "#a5aaad");
}
for (let r = -1; r < 80; r++) if (isBlack(r)) {
  rect(kb, 0, rowY(r), 30, 15, "#2f3234");
}

const ruler = document.getElementById("ruler");
for (let bar = 0; bar < 16; bar++) {
  const el = document.createElement("span");
  el.style.left = x(bar * 16) + 1 + "px";
  el.textContent = bar + 1;
  ruler.appendChild(el);
}
const head = document.createElement("i");
head.style.left = "636px";
ruler.appendChild(head);

const velo = document.getElementById("velogrid");
for (let i = 1; i < 16; i++) rect(velo, 0, Math.round(i * 8.75), "100%", 1, i % 4 ? "#1c2a3038" : "#1c2a3090");
columns(velo);
playhead(velo);
for (const [from, to] of [[24, 32], [36, 64], [88, 96], [100, 128]]) rect(velo, x(from), 31, x(to) - x(from), 1, "#a5d8ac");
for (const step of new Set(notes.map(n => n[1]))) {
  rect(velo, x(step) - 1, 33, 2, "100%", "#c4f0c9");
  add(velo, "circle", { cx: x(step), cy: 31.5, r: 2, fill: "#4c7757", stroke: "#a5d8ac" });
}

const mini = document.getElementById("mini");
const segments = [
  [332, 375, 5], [343, 375, 11], [398, 408, 3], [408, 430, 2], [430, 441, 1], [441, 485, 2], [485, 550, 5], [408, 419, 10],
  [419, 430, 8], [441, 452, 7], [452, 485, 8], [496, 550, 10], [683, 726, 5], [693, 726, 11], [748, 759, 3], [759, 781, 2],
  [781, 792, 3], [792, 868, 5], [759, 770, 10], [770, 781, 8], [792, 803, 10], [803, 836, 11], [847, 868, 11], [868, 901, 6], [880, 901, 11]
];
for (const [a, b, y] of segments) rect(mini, a - 201, y, b - a, 1, y > 9 ? "#aac9b7" : "#d3eadb");
rect(mini, 442, 1, 1, 11, "#dfe06a");

const rows = [
  ["Current project", "docs", "peach h13"], ["Recent files", "folderr", "lime h16"], ["Plugin database", "plugh", "blue h18"],
  ["Plugin presets", "plugh", "plum h18"], ["Channel presets", "chan", "plum h18"], ["Mixer presets", "mixs", "plum h18"],
  ["Scores", "note", "plum h18"], ["1PRESETS", "folder", "mint"], ["Audio", "person", "mint"], ["Backup", "folderr", "lime"],
  ["Channel envelopes", "folder", "sage h16"], ["Clipboard files", "folder", "sage"], ["December Mel..ck (beluvd)", "folder", "open h16"],
  ["Abmaj 146 Noreach (beluvd)", "mp3", "file"], ["Amaj 140 mallgoth (beluvd)", "mp3", "file"], ["Bb maj 150 fr..hrow (beluvd)", "mp3", "file"],
  ["Bbmaj 140 to..rama (beluvd)", "mp3", "file"], ["Dmaj 136 starter (beluvd)", "mp3", "file"], ["Dmaj 150 blan..tare (beluvd)", "mp3", "file"],
  ["Ebmin 145 cas..uvd) - Part_1", "clip", "file"], ["Ebmin 145 ca..lty (beluvd)", "mp3", "file picked"], ["Ebmin 165 rgb (beluvd)", "mp3", "file"],
  ["Fmaj 142 Jazzparty (beluvd)", "mp3", "file"], ["Gmaj 155 star..ruck (beluvd)", "mp3", "file"], ["Dem Kits", "folder", "open"],
  ["!!!!!!", "folder", "mint sub1"], ["- ! @ameonii..- soundkit", "folder", "mint sub2 h16"], ["! 1000+ sh..erbox stash", "folder", "mint sub2"],
  ["! Ginseng..ma DRUMKIT", "folder", "mint sub2"], ["!(@kittyflo..ustom+stash", "folder", "mint sub2 h16"],
  ["!REST MEL..WYEAR 2026", "folder", "mint sub2"], ["#maknae2021", "folder", "mint sub2"], ["(@1waifu7)..m kit 2k22", "folder", "mint sub2"]
];
const tree = document.getElementById("tree");
for (const [label, icon, cls] of rows) {
  const li = document.createElement("li");
  li.className = cls;
  add(add(li, "svg", {}), "use", { href: "#" + icon });
  li.append(label);
  tree.appendChild(li);
}
```
